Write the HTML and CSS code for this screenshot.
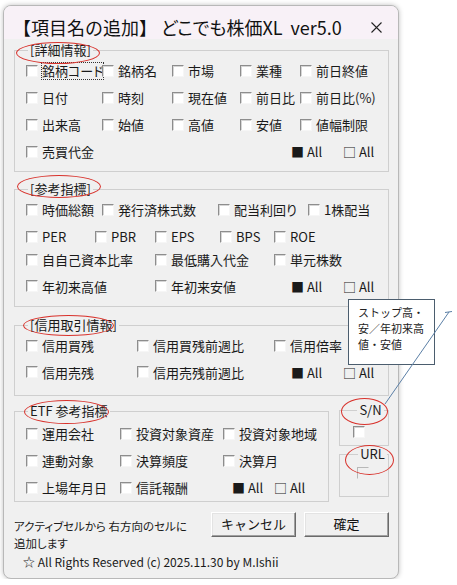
FILE: index.html
```html
<!DOCTYPE html>
<html lang="ja">
<head>
  <meta charset="UTF-8" />
  <meta name="viewport" content="width=device-width, initial-scale=1.0" />
  <title>項目名の追加</title>
  <link rel="stylesheet" href="styles.css">
</head>
<body>
  <div class="window">
    <div class="titlebar">
      <span class="title">【項目名の追加】 <span class="app">どこでも株価XL&nbsp;&nbsp;ver5.0</span></span>
      <svg class="close" width="11" height="11" viewBox="0 0 11 11">
        <path d="M0.5 0.5 L10.5 10.5 M10.5 0.5 L0.5 10.5" stroke="#222" stroke-width="1.1" fill="none" />
      </svg>
    </div>

    <div class="body">
      <fieldset class="grp g1">
        <legend>[詳細情報]</legend>
        <div class="row">
          <label class="chk w76"><span class="cb"></span><span class="focus">銘柄コード</span></label>
          <label class="chk w70"><span class="cb"></span>銘柄名</label>
          <label class="chk w68"><span class="cb"></span>市場</label>
          <label class="chk w60"><span class="cb"></span>業種</label>
          <label class="chk"><span class="cb"></span>前日終値</label>
        </div>
        <div class="row">
          <label class="chk w76"><span class="cb"></span>日付</label>
          <label class="chk w70"><span class="cb"></span>時刻</label>
          <label class="chk w68"><span class="cb"></span>現在値</label>
          <label class="chk w60"><span class="cb"></span>前日比</label>
          <label class="chk"><span class="cb"></span>前日比(%)</label>
        </div>
        <div class="row">
          <label class="chk w76"><span class="cb"></span>出来高</label>
          <label class="chk w70"><span class="cb"></span>始値</label>
          <label class="chk w68"><span class="cb"></span>高値</label>
          <label class="chk w60"><span class="cb"></span>安値</label>
          <label class="chk"><span class="cb"></span>値幅制限</label>
        </div>
        <div class="row">
          <label class="chk"><span class="cb"></span>売買代金</label>
          <div class="alls"><span class="all">■ All</span><span>□ All</span></div>
        </div>
      </fieldset>

      <fieldset class="grp g2">
        <legend>[参考指標]</legend>
        <div class="row">
          <label class="chk w76"><span class="cb"></span>時価総額</label>
          <label class="chk w116"><span class="cb"></span>発行済株式数</label>
          <label class="chk w90"><span class="cb"></span>配当利回り</label>
          <label class="chk"><span class="cb"></span>1株配当</label>
        </div>
        <div class="row">
          <label class="chk w69"><span class="cb"></span>PER</label>
          <label class="chk w60"><span class="cb"></span>PBR</label>
          <label class="chk w65"><span class="cb"></span>EPS</label>
          <label class="chk w54"><span class="cb"></span>BPS</label>
          <label class="chk"><span class="cb"></span>ROE</label>
        </div>
        <div class="row short">
          <label class="chk w129"><span class="cb"></span>自自己資本比率</label>
          <label class="chk w119"><span class="cb"></span>最低購入代金</label>
          <label class="chk"><span class="cb"></span>単元株数</label>
        </div>
        <div class="row tall">
          <label class="chk w129"><span class="cb"></span>年初来高値</label>
          <label class="chk"><span class="cb"></span>年初来安値</label>
          <div class="alls"><span class="all">■ All</span><span>□ All</span></div>
        </div>
      </fieldset>

      <fieldset class="grp g3">
        <legend>[信用取引情報]</legend>
        <div class="row">
          <label class="chk w111"><span class="cb"></span>信用買残</label>
          <label class="chk w137"><span class="cb"></span>信用買残前週比</label>
          <label class="chk"><span class="cb"></span>信用倍率</label>
        </div>
        <div class="row r26">
          <label class="chk w111"><span class="cb"></span>信用売残</label>
          <label class="chk"><span class="cb"></span>信用売残前週比</label>
          <div class="alls"><span class="all">■ All</span><span>□ All</span></div>
        </div>
      </fieldset>

      <div class="etf-row">
        <fieldset class="grp g4">
          <legend>ETF 参考指標</legend>
          <div class="row">
            <label class="chk w94"><span class="cb"></span>運用会社</label>
            <label class="chk w103"><span class="cb"></span>投資対象資産</label>
            <label class="chk"><span class="cb"></span>投資対象地域</label>
          </div>
          <div class="row">
            <label class="chk w94"><span class="cb"></span>連動対象</label>
            <label class="chk w103"><span class="cb"></span>決算頻度</label>
            <label class="chk"><span class="cb"></span>決算月</label>
          </div>
          <div class="row">
            <label class="chk w94"><span class="cb"></span>上場年月日</label>
            <label class="chk w112"><span class="cb"></span>信託報酬</label>
            <div class="alls near"><span class="all">■ All</span><span>□ All</span></div>
          </div>
        </fieldset>

        <div class="side">
          <fieldset class="mini sn">
            <legend>S/N</legend>
            <span class="cb"></span>
          </fieldset>
          <fieldset class="mini url">
            <legend>URL</legend>
            <span class="cb off"></span>
          </fieldset>
        </div>
      </div>

      <div class="actions">
        <p class="hint">アクティブセルから 右方向のセルに<br>追加します</p>
        <div class="buttons">
          <button>キャンセル</button>
          <button>確定</button>
        </div>
      </div>

      <p class="copy">☆ All Rights Reserved (c) 2025.11.30 by M.Ishii</p>
    </div>
  </div>

  <!-- notes drawn over the dialog -->
  <div class="notes">
    <div class="ring r1"></div>
    <div class="ring r2"></div>
    <div class="ring r3"></div>
    <div class="ring r4"></div>
    <div class="ring r5"></div>
    <div class="ring r6"></div>
    <div class="callout">ストップ高・<br>安／年初来高<br>値・安値</div>
    <svg class="leader" width="457" height="585">
      <path d="M385 404 L449 312 M445 312.5 L452 311.5" stroke="#5b7fa6" stroke-width="1" fill="none" />
    </svg>
  </div>
</body>
</html>
```

FILE: styles.css
```css
body {
  margin: 0;
  background: #fff;
  font-family: "Noto Sans CJK JP", sans-serif;
  font-size: 13px;
  color: #1a1a1a;
  font-feature-settings: "palt";
}
.window {
  width: 396px;
  height: 574px;
  box-sizing: border-box;
  margin: 5px 0 0 3px;
  border: 1px solid #b8b8b8;
  border-radius: 8px;
  background: #f0f0f0;
  box-shadow: 0 0 5px rgba(0, 0, 0, 0.25);
  overflow: hidden;
}
.titlebar {
  height: 33px;
  box-sizing: border-box;
  padding: 9px 16px 0 9px;
  background: #f8f1f7;
  display: flex;
  justify-content: space-between;
  align-items: flex-start;
}
.title {
  font-size: 18px;
  line-height: 24px;
  color: #111;
  font-feature-settings: normal;
}
.title .app {
  font-feature-settings: "palt";
}
.close {
  margin-top: 7px;
}
.body {
  padding: 4px 9px 0 10px;
}
.grp {
  margin: 0;
  padding: 0 0 6px 11px;
  border: 1px solid #cfcfcf;
  min-width: 0;
}
legend {
  padding: 0 2px;
  margin-left: 2px;
  font-size: 13px;
  line-height: 14px;
}
.g2 {
  margin-top: 10px;
  padding-bottom: 3px;
}
.g3 {
  margin-top: 11px;
  padding-bottom: 10px;
}
.row {
  display: flex;
  align-items: center;
  height: 27px;
}
.g2 .short { height: 19px; }
.g2 .tall { height: 34px; }
.g3 .r26 { height: 26px; }
.chk {
  display: flex;
  align-items: center;
  gap: 4px;
  flex: none;
  white-space: nowrap;
}
.cb {
  display: block;
  width: 12px;
  height: 12px;
  box-sizing: border-box;
  flex: none;
  background: #fff;
  border: 1px solid;
  border-color: #8d8d8d #f6f6f6 #f6f6f6 #8d8d8d;
  box-shadow: inset 1px 1px 0 #d6d6d6;
}
.cb.off {
  background: transparent;
  border-color: #b8b8b8 transparent transparent #b8b8b8;
  box-shadow: none;
}
.focus {
  outline: 1px dotted #333;
  outline-offset: 0;
  line-height: 16px;
}
.w54 { width: 54px; }
.w60 { width: 60px; }
.w65 { width: 65px; }
.w68 { width: 68px; }
.w69 { width: 69px; }
.w70 { width: 70px; }
.w76 { width: 76px; }
.w90 { width: 90px; }
.w94 { width: 94px; }
.w103 { width: 103px; }
.w111 { width: 111px; }
.w112 { width: 112px; }
.w116 { width: 116px; }
.w119 { width: 119px; }
.w129 { width: 129px; }
.w137 { width: 137px; }
.alls {
  margin-left: auto;
  width: 97px;
  display: flex;
  white-space: nowrap;
}
.alls .all {
  width: 52px;
}
.alls.near {
  margin-left: 0;
  width: auto;
}
.alls.near .all {
  width: 42px;
}
.etf-row {
  display: flex;
  align-items: flex-start;
  gap: 10px;
  margin-top: 7px;
}
.g4 {
  flex: 1;
  margin-top: 1px;
  padding: 2px 0 0 11px;
}
.side {
  width: 50px;
  display: flex;
  flex-direction: column;
  gap: 1px;
}
.mini {
  margin: 0;
  border: 1px solid #cfcfcf;
  min-width: 0;
}
.mini legend {
  margin: 0 auto;
  padding: 0 2px;
}
.sn {
  padding: 9px 0 7px 13px;
}
.url {
  padding: 6px 0 17px 17px;
}
.actions {
  display: flex;
  justify-content: space-between;
  align-items: flex-start;
  margin-top: 10px;
}
.hint {
  margin: 6px 0 0;
  font-size: 11.5px;
  line-height: 17px;
}
.buttons {
  display: flex;
  gap: 8px;
}
button {
  width: 85px;
  height: 25px;
  padding: 0 0 2px;
  font-family: inherit;
  font-size: 13px;
  color: #111;
  background: #f0f0f0;
  border: 1px solid;
  border-color: #fff #6a6a6a #6a6a6a #fff;
  box-shadow: inset -1px -1px 0 #a0a0a0, inset 1px 1px 0 #e3e3e3;
}
.copy {
  margin: 3px 0 0;
  padding-left: 9px;
  font-size: 12px;
  line-height: 14px;
}
.notes {
  position: absolute;
  left: 0;
  top: 0;
  width: 457px;
  height: 585px;
  pointer-events: none;
}
.ring {
  position: absolute;
  box-sizing: border-box;
  border: 1.5px solid #d8322c;
  border-radius: 50%;
}
.r1 { left: 16px; top: 42px; width: 84px; height: 22px; }
.r2 { left: 17px; top: 175px; width: 84px; height: 23px; }
.r3 { left: 23px; top: 315px; width: 91px; height: 21px; }
.r4 { left: 24px; top: 400px; width: 85px; height: 24px; }
.r5 { left: 341px; top: 398px; width: 47px; height: 27px; }
.r6 { left: 345px; top: 445px; width: 49px; height: 30px; }
.callout {
  position: absolute;
  left: 348px;
  top: 299px;
  width: 87px;
  height: 66px;
  box-sizing: border-box;
  padding: 4px 0 0 9px;
  background: #fff;
  border: 1px solid #4b5d6e;
  font-size: 11px;
  line-height: 16px;
  color: #222;
  font-feature-settings: normal;
}
.leader {
  position: absolute;
  left: 0;
  top: 0;
}
```
